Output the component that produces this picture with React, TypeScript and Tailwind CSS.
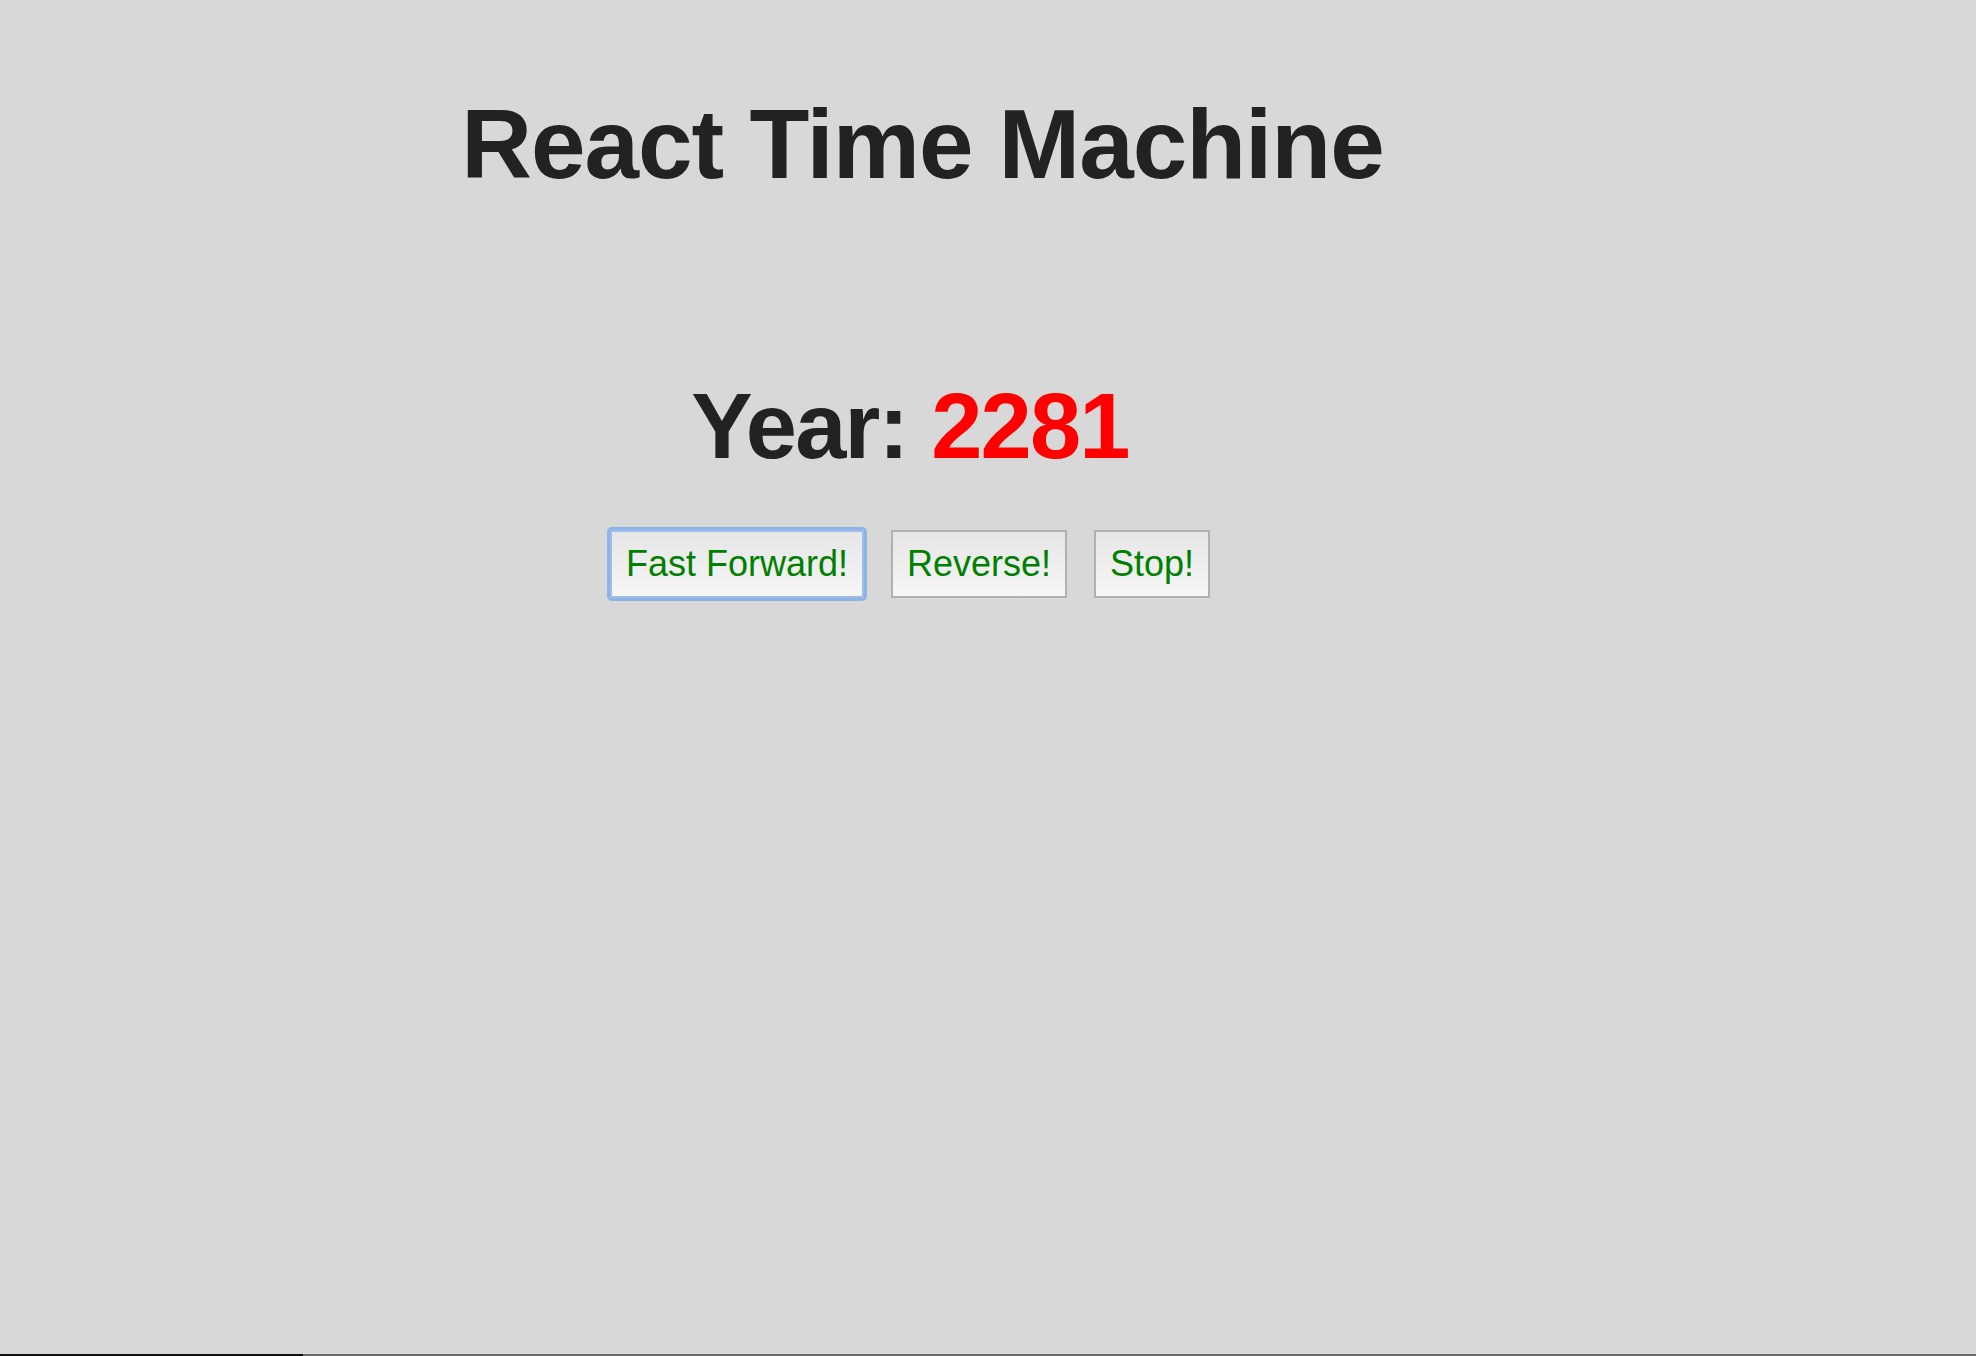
import React from "react";

export default function App() {
  return (
    <div className="h-[1356px] w-full bg-[#d8d8d8] flex flex-col font-['Liberation_Sans',Arial,sans-serif] overflow-hidden">
      <div className="flex-1 w-[1820px] flex flex-col items-center">
        <h1 className="mt-[95px] pl-[25px] text-[98px] leading-none font-bold tracking-[-1px] text-[#222222]">
          React Time Machine
        </h1>
        <h2 className="mt-[187px] text-[92px] leading-none font-bold tracking-[-1.8px] text-[#222222]">
          Year: <span className="text-[#ff0000]">2281</span>
        </h2>
        <div className="mt-[58px] flex gap-[27px]">
          <button className="h-[68px] px-[14px] border-2 border-[#9dbde8] rounded-[2px] ring-[3px] ring-[#8cb4e6] bg-gradient-to-b from-[#e6e6e6] to-[#f6f6f6] text-[36px] leading-[40px] text-[#008000]">
            Fast Forward!
          </button>
          <button className="h-[68px] px-[14px] border-2 border-[#b1b1b1] bg-gradient-to-b from-[#e6e6e6] to-[#f6f6f6] text-[36px] leading-[40px] text-[#008000]">
            Reverse!
          </button>
          <button className="h-[68px] px-[14px] border-2 border-[#b1b1b1] bg-gradient-to-b from-[#e6e6e6] to-[#f6f6f6] text-[36px] leading-[40px] text-[#008000]">
            Stop!
          </button>
        </div>
      </div>
      <div className="h-[2px] flex">
        <div className="w-[303px] bg-[#111111]" />
        <div className="flex-1 bg-[#6b6b6b]" />
      </div>
    </div>
  );
}
